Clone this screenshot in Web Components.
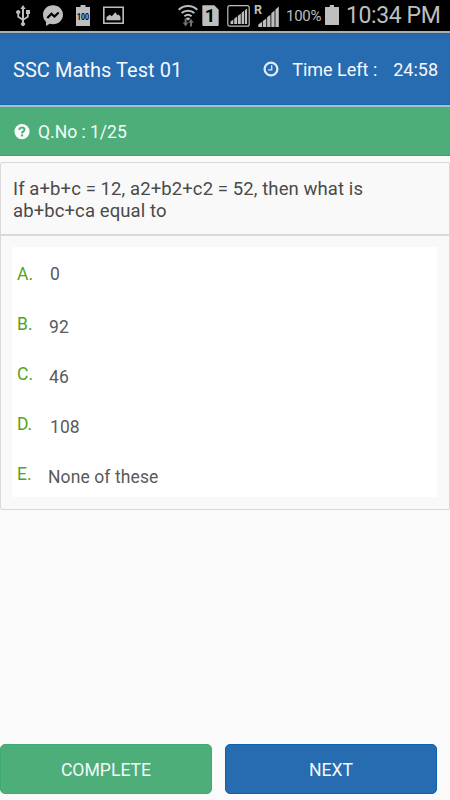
<!DOCTYPE html>
<html lang="en">
<head>
<meta charset="utf-8">
<meta name="viewport" content="width=device-width, initial-scale=1">
<title>SSC Maths Test 01</title>
<style>
    html, body { margin: 0; height: 100%; }
    body { background: #fafafa; font-family: Roboto, "Liberation Sans", sans-serif; overflow: hidden; }
</style>
</head>
<body>

<quiz-app>
    <status-bar slot="status" time="10:34 PM" battery="100%"></status-bar>
    <test-header slot="header" time="24:58">SSC Maths Test 01</test-header>
    <question-count slot="count">Q.No : 1/25</question-count>
    <question-card>
        <span slot="question">If a+b+c = 12, a2+b2+c2 = 52, then what is<br>ab+bc+ca equal to</span>
        <answer-option letter="A." style="--drop: 0px; --indent: 38px">0</answer-option>
        <answer-option letter="B.">92</answer-option>
        <answer-option letter="C.">46</answer-option>
        <answer-option letter="D." style="--indent: 38px">108</answer-option>
        <answer-option letter="E." style="--indent: 36px">None of these</answer-option>
    </question-card>
    <action-button slot="actions">COMPLETE</action-button>
    <action-button slot="actions" kind="next">NEXT</action-button>
</quiz-app>

<script>
// ── Page frame ─────────────────────────────────────────────
class QuizApp extends HTMLElement {
    constructor() {
        super();
        this.attachShadow({ mode: "open" });
    }

    connectedCallback() {
        this.shadowRoot.innerHTML = `
            <style>
                :host { display: flex; flex-direction: column; height: 800px; background: #fafafa; }
                main { flex: 1; padding-top: 6px; }
                footer { display: grid; grid-template-columns: 212px 212px; gap: 13px; padding-bottom: 6px; }
            </style>
            <slot name="status"></slot>
            <slot name="header"></slot>
            <slot name="count"></slot>
            <main><slot></slot></main>
            <footer><slot name="actions"></slot></footer>
        `;
    }
}

// ── Android status bar ─────────────────────────────────────
class StatusBar extends HTMLElement {
    constructor() {
        super();
        this.attachShadow({ mode: "open" });
    }

    connectedCallback() {
        let time    = this.getAttribute("time") || "";
        let battery = this.getAttribute("battery") || "";

        this.shadowRoot.innerHTML = `
            <style>
                :host {
                    display: flex; justify-content: space-between; align-items: center;
                    box-sizing: border-box; height: 33px; padding: 0 9px 0 16px;
                    background: #000; border-bottom: 2px solid #a9adb7; color: #bebebe;
                }
                div { display: flex; align-items: center; height: 31px; }
                svg { display: block; fill: currentColor; flex: none; overflow: visible; }
                .notices { gap: 13px; }
                .level { font-size: 15px; letter-spacing: -.3px; margin-left: 6px; width: 39px; }
                .time { font-size: 23px; letter-spacing: -.4px; margin-left: 7px; width: 95px; white-space: nowrap; }
                text { font-family: Roboto, sans-serif; }
            </style>
            <div class="notices">
                <svg width="14" height="31" viewBox="0 0 14 31">
                    <path d="M7 5l2.600 4H8v9.200l3-1.900V14h-1v-4h4v4h-1.300v3.200L8 20.300V22.300a2 2 0 1 1-2 0V20.300L1.300 17.200v-3.300a2 2 0 1 1 1.800 0v2.400l2.900 1.900V9H4.400z"/>
                </svg>
                <svg width="20" height="31" viewBox="0 0 20 31">
                    <path d="M10 5.300c5.700 0 10 4.200 10 9.500s-4.300 9.500-10 9.500c-1.200 0-2.300-.2-3.300-.5L3 26v-4.200c-1.900-1.800-3-4.200-3-7 0-5.300 4.300-9.500 10-9.500z"/>
                    <path fill="none" stroke="#000" stroke-width="2.300" d="M4.300 18l4.200-4.200 3 2.700 4.200-4"/>
                </svg>
                <svg width="14" height="31" viewBox="0 0 14 31">
                    <path d="M4.500 5h5v2H14v19H0V7h4.500z"/>
                    <text transform="translate(7 20) scale(.78 1)" font-size="9" font-weight="700" text-anchor="middle" fill="#000">100</text>
                </svg>
                <svg width="21" height="31" viewBox="0 0 21 31">
                    <path fill="none" stroke="currentColor" stroke-width="1.600" d="M.8 7.300h19.400v16H.8z"/>
                    <path d="M3.500 20.300V17l3.300-2.200 2 1.500 3.500-4 2.200 3 1.200-.7 1.800 2.400v3.300z"/>
                </svg>
            </div>
            <div>
                <svg width="20" height="31" viewBox="0 0 20 31">
                    <g fill="none" stroke="currentColor" stroke-width="2">
                        <path d="M.7 9.700c5.300-4.800 13.300-4.800 18.600 0"/>
                        <path d="M3.600 13.100c3.700-3.300 9.100-3.300 12.800 0"/>
                        <path d="M6.400 16.300c2.100-1.900 5.100-1.900 7.200 0"/>
                    </g>
                    <path d="M7.700 18.300c1.300-1.200 3.300-1.200 4.600 0L10 20.800z"/>
                    <path fill="#707070" d="M6.600 18.500h2V22.500h1.800L7.600 26.500 4.800 22.500h1.800zM12 26.500V22.800h-1.800l2.800-4 2.800 4H14v3.700z"/>
                </svg>
                <svg width="17" height="31" viewBox="0 0 17 31" style="margin-left: 4px">
                    <path d="M1 5.300h11.300l4.400 4.400v15.300q0 1-1 1H1.300q-1 0-1-1V6.300q0-1 .7-1z"/>
                    <text x="8" y="22.300" font-size="18.500" font-weight="700" text-anchor="middle" fill="#000">1</text>
                </svg>
                <svg width="23" height="31" viewBox="0 0 23 31" style="margin-left: 8px">
                    <rect x=".8" y="5.600" width="21.400" height="20.600" rx="2" fill="none" stroke="currentColor" stroke-width="1.200"/>
                    <path d="M3.500 21.500l2.800-2V24H3.500zM7.200 18.700l2.900-2.100V24H7.200zM10.900 15.800l2.900-2.100V24h-2.900zM14.600 12.800l2.500-2V24h-2.500zM17.900 10.300l2.200-1.800V24h-2.200z"/>
                </svg>
                <svg width="26" height="31" viewBox="0 0 26 31" style="margin-left: 4px">
                    <text x="0" y="14.300" font-size="12.500" font-weight="700">R</text>
                    <path d="M4.300 24.500l3.700-2.800V27H4.300zM8.800 20.900l3.500-2.500V27H8.800zM13.100 17.300l3.400-2.500V27h-3.400zM17.300 13.300l3.300-2.700V27h-3.300zM21.400 9.600l3.400-3.100V27h-3.400z"/>
                </svg>
                <span class="level">${battery}</span>
                <svg width="14" height="31" viewBox="0 0 14 31">
                    <path d="M4.700 5h4.300v2H14v18H0V7h4.700z"/>
                </svg>
                <span class="time">${time}</span>
            </div>
        `;
    }
}

// ── Blue title bar with the countdown ──────────────────────
class TestHeader extends HTMLElement {
    constructor() {
        super();
        this.attachShadow({ mode: "open" });
    }

    connectedCallback() {
        let time = this.getAttribute("time") || "00:00";

        this.shadowRoot.innerHTML = `
            <style>
                :host {
                    display: flex; align-items: center; box-sizing: border-box; height: 74px;
                    padding: 0 12px 0 13px; color: #f3f8fd; white-space: nowrap;
                    background: linear-gradient(#2864a4, #276bb0 7px, #276bb0 71px, #0a60b2 72px);
                    background-size: 100% 72px; background-repeat: no-repeat;
                    border-bottom: 2px solid #a5c4bf;
                }
                .title { font-size: 20px; letter-spacing: .05px; flex: 1; padding-top: 1px; }
                .timer { display: flex; align-items: center; font-size: 18px; }
                .timer span { padding-top: 1px; }
                svg { display: block; margin-right: 13px; }
                .left { width: 101px; }
            </style>
            <span class="title"><slot></slot></span>
            <div class="timer">
                <svg width="16" height="16" viewBox="0 0 16 16" fill="none" stroke="#dceaf7">
                    <circle cx="8" cy="8" r="6.400" stroke-width="2.300"/>
                    <path stroke-width="1.300" d="M8.700 4.300v4.500H5.200"/>
                </svg>
                <span class="left">Time Left :</span>
                <span>${time}</span>
            </div>
        `;
    }
}

// ── Green question counter ─────────────────────────────────
class QuestionCount extends HTMLElement {
    constructor() {
        super();
        this.attachShadow({ mode: "open" });
    }

    connectedCallback() {
        this.shadowRoot.innerHTML = `
            <style>
                :host {
                    display: flex; align-items: center; gap: 8px; box-sizing: border-box; height: 49px;
                    padding: 1px 0 0 14px; background: #4dae7a; border-bottom: 1px solid #2fa86b;
                    color: #f4fbf7; font-size: 17.500px;
                }
                svg { display: block; }
            </style>
            <svg width="16" height="16" viewBox="0 0 16 16">
                <circle cx="8" cy="7.600" r="7.600" fill="#f8fcfa"/>
                <path fill="none" stroke="#4dae7a" stroke-width="2" d="M5.300 5.900C5.400 2.900 10.600 2.900 10.500 5.700 10.400 7.400 8.100 7.300 8 9.400"/>
                <path fill="#4dae7a" d="M6.900 10.400h2.200v2H6.900z"/>
            </svg>
            <span><slot></slot></span>
        `;
    }
}

// ── Question text and its list of answers ──────────────────
class QuestionCard extends HTMLElement {
    constructor() {
        super();
        this.attachShadow({ mode: "open" });
    }

    connectedCallback() {
        this.shadowRoot.innerHTML = `
            <style>
                :host { display: block; box-sizing: border-box; border: 1px solid #d9d9d9; border-radius: 2px; background: #f9f9f9; }
                .question {
                    box-sizing: border-box; height: 73px; padding: 15px 11px 0 12px;
                    border-bottom: 2px solid #d9d9d9;
                    font-size: 18.500px; line-height: 22px; letter-spacing: .1px; color: #4a4a4a; white-space: nowrap;
                }
                .answers { margin: 11px 12px 12px 11px; background: #fff; }
            </style>
            <div class="question"><slot name="question"></slot></div>
            <div class="answers"><slot></slot></div>
        `;
    }
}

class AnswerOption extends HTMLElement {
    constructor() {
        super();
        this.attachShadow({ mode: "open" });
    }

    connectedCallback() {
        let letter = this.getAttribute("letter") || "";

        this.shadowRoot.innerHTML = `
            <style>
                :host { display: grid; grid-template-columns: var(--indent, 37px) 1fr; height: 50px; line-height: 22px; font-size: 17.500px; }
                .letter { padding: 16px 0 0 5px; color: #55a31c; }
                .text { padding-top: calc(16px + var(--drop, 3px)); letter-spacing: .1px; color: #5a5a5a; }
            </style>
            <span class="letter">${letter}</span>
            <span class="text"><slot></slot></span>
        `;
    }
}

// ── Bottom buttons ─────────────────────────────────────────
class ActionButton extends HTMLElement {
    constructor() {
        super();
        this.attachShadow({ mode: "open" });
    }

    connectedCallback() {
        this.shadowRoot.innerHTML = `
            <style>
                :host { display: block; --fill: #4dae7a; --edge: #3fab73; }
                :host([kind="next"]) { --fill: #276bb0; --edge: #0a60b2; }
                button {
                    display: block; width: 100%; height: 50px; padding: 1px 0 0;
                    border: 1px solid var(--edge); border-radius: 5px; background: var(--fill);
                    color: #f3f9f9; font: 17.600px Roboto, sans-serif;
                }
            </style>
            <button><slot></slot></button>
        `;
    }
}

customElements.define("quiz-app", QuizApp);
customElements.define("status-bar", StatusBar);
customElements.define("test-header", TestHeader);
customElements.define("question-count", QuestionCount);
customElements.define("question-card", QuestionCard);
customElements.define("answer-option", AnswerOption);
customElements.define("action-button", ActionButton);
</script>
</body>
</html>
